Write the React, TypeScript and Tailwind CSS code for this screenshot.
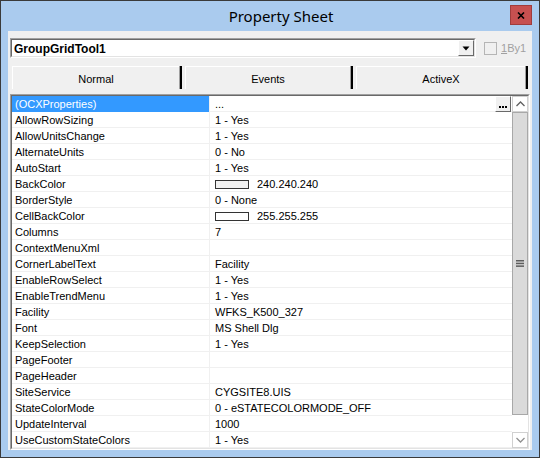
import React from "react";

const rows: { name: string; value: string; swatch?: boolean }[] = [
  { name: "(OCXProperties)", value: "..." },
  { name: "AllowRowSizing", value: "1 - Yes" },
  { name: "AllowUnitsChange", value: "1 - Yes" },
  { name: "AlternateUnits", value: "0 - No" },
  { name: "AutoStart", value: "1 - Yes" },
  { name: "BackColor", value: "240.240.240", swatch: true },
  { name: "BorderStyle", value: "0 - None" },
  { name: "CellBackColor", value: "255.255.255", swatch: true },
  { name: "Columns", value: "7" },
  { name: "ContextMenuXml", value: "" },
  { name: "CornerLabelText", value: "Facility" },
  { name: "EnableRowSelect", value: "1 - Yes" },
  { name: "EnableTrendMenu", value: "1 - Yes" },
  { name: "Facility", value: "WFKS_K500_327" },
  { name: "Font", value: "MS Shell Dlg" },
  { name: "KeepSelection", value: "1 - Yes" },
  { name: "PageFooter", value: "" },
  { name: "PageHeader", value: "" },
  { name: "SiteService", value: "CYGSITE8.UIS" },
  { name: "StateColorMode", value: "0 - eSTATECOLORMODE_OFF" },
  { name: "UpdateInterval", value: "1000" },
  { name: "UseCustomStateColors", value: "1 - Yes" },
];

function Tab({ label, w }: { label: string; w: string }) {
  return (
    <div className={`${w} h-[23px] flex`}>
      <div className="flex-1 h-full border-t border-l border-white bg-[#f0f0f0] flex items-center justify-center pt-[3px] text-[11px] text-black">
        {label}
      </div>
      <div className="w-[1px] h-full bg-[#a0a0a0]" />
      <div className="w-[2px] h-full bg-[#000]" />
    </div>
  );
}

export default function App() {
  return (
    <div
      className="w-[540px] h-[458px] bg-[#aacbee] border border-[#3a3a3a] flex flex-col"
      style={{ fontFamily: '"Liberation Sans", Arial, sans-serif' }}
    >
      {/* title bar */}
      <div className="h-[30px] relative flex items-center justify-center">
        <span
          className="text-[15px] text-black pl-[22px]"
          style={{ fontFamily: '"Noto Sans", "Open Sans", sans-serif' }}
        >
          Property Sheet
        </span>
        <div className="absolute right-[7px] top-[4px] w-[22px] h-[20px] bg-[#c75050] border border-[#a03c3c] flex items-center justify-center">
          <svg width="8" height="7" viewBox="0 0 8 7">
            <path d="M1 0.5 L7 6.5 M7 0.5 L1 6.5" stroke="#000" strokeWidth="1.6" />
          </svg>
        </div>
      </div>

      {/* client area */}
      <div className="mx-[7px] mb-[7px] flex-1 bg-[#f0f0f0] flex flex-col">
        {/* combo row */}
        <div className="flex items-center mt-[7px] ml-[2px] h-[20px]">
          <div className="w-[466px] h-[20px] border-t border-l border-[#a0a0a0] border-b border-r border-b-white border-r-white">
            <div className="w-full h-full border-t border-l border-[#696969] border-b border-r border-b-[#e3e3e3] border-r-[#e3e3e3] bg-white flex items-center">
              <span className="pl-[2px] pt-[1px] text-[12px] font-bold text-black flex-1 leading-none">GroupGridTool1</span>
              <div className="w-[16px] h-[16px] bg-[#f0f0f0] border-t border-l border-white border-b border-r border-b-[#696969] border-r-[#696969] flex items-center justify-center">
                <svg width="8" height="5" viewBox="0 0 8 5">
                  <path d="M0.5 0.5 H7.5 L4 4.5 Z" fill="#000" />
                </svg>
              </div>
            </div>
          </div>
          <div className="ml-[8px] w-[13px] h-[13px] border border-[#b5b5b5] bg-[#f0f0f0]" />
          <span className="ml-[4px] text-[11px] text-[#a0a0a0]">
            <span className="underline">1</span>By1
          </span>
        </div>

        {/* tabs */}
        <div className="flex mt-[8px] ml-[4px] gap-[3px]">
          <Tab label="Normal" w="w-[170px]" />
          <Tab label="Events" w="w-[168px]" />
          <Tab label="ActiveX" w="w-[172px]" />
        </div>

        {/* grid */}
        <div className="mt-[5px] ml-[2px] w-[520px] h-[356px] border-t border-l border-[#a0a0a0] border-b border-r border-b-white border-r-white">
          <div className="w-full h-full border-t border-l border-[#696969] border-b border-r border-b-[#e3e3e3] border-r-[#e3e3e3] bg-white flex">
            <div className="flex-1 flex flex-col">
              {rows.map((r, i) => (
                <div key={r.name} className="h-[16px] flex text-[11px] leading-none">
                  <div
                    className={`w-[197px] h-full flex items-center pl-[3px] pt-[1px] ${
                      i === 0 ? "bg-[#3399ff] text-white" : "text-black border-b border-[#f0f0f0]"
                    }`}
                  >
                    {r.name}
                  </div>
                  <div className="w-[1px] h-full bg-[#f0f0f0]" />
                  <div className="flex-1 h-full flex items-center pl-[5px] pt-[1px] border-b border-[#f0f0f0] text-black relative">
                    {r.swatch && (
                      <div
                        className="w-[34px] h-[9px] border border-[#333] bg-[#f0f0f0] mr-[8px]"
                        style={r.value === "255.255.255" ? { background: "#fff" } : undefined}
                      />
                    )}
                    <span>{r.value}</span>
                    {i === 0 && (
                      <div className="absolute right-[1px] top-0 w-[16px] h-[16px] bg-[#f0f0f0] border-t border-l border-white border-b border-r border-b-[#696969] border-r-[#696969] flex items-end justify-center pb-[3px]">
                        <svg width="8" height="2" viewBox="0 0 8 2">
                          <rect x="0" y="0" width="2" height="2" fill="#000" />
                          <rect x="3" y="0" width="2" height="2" fill="#000" />
                          <rect x="6" y="0" width="2" height="2" fill="#000" />
                        </svg>
                      </div>
                    )}
                  </div>
                </div>
              ))}
            </div>
            {/* scrollbar */}
            <div className="w-[16px] h-full flex flex-col bg-white">
              <div className="h-[16px] border border-[#d0d0d0] bg-white flex items-center justify-center">
                <svg width="9" height="6" viewBox="0 0 9 6">
                  <path d="M0.5 5 L4.5 1 L8.5 5" stroke="#606060" strokeWidth="1.3" fill="none" />
                </svg>
              </div>
              <div className="h-[303px] bg-[#dadada] border border-[#a8a8a8] flex items-center justify-center">
                <svg width="8" height="7" viewBox="0 0 8 7">
                  <rect x="0" y="0" width="8" height="1.5" fill="#5e5e5e" />
                  <rect x="0" y="2.7" width="8" height="1.5" fill="#5e5e5e" />
                  <rect x="0" y="5.4" width="8" height="1.5" fill="#5e5e5e" />
                </svg>
              </div>
              <div className="flex-1 bg-white" />
              <div className="h-[16px] border border-[#d0d0d0] bg-white flex items-center justify-center">
                <svg width="9" height="6" viewBox="0 0 9 6">
                  <path d="M0.5 1 L4.5 5 L8.5 1" stroke="#909090" strokeWidth="1.3" fill="none" />
                </svg>
              </div>
            </div>
          </div>
        </div>
      </div>
    </div>
  );
}
